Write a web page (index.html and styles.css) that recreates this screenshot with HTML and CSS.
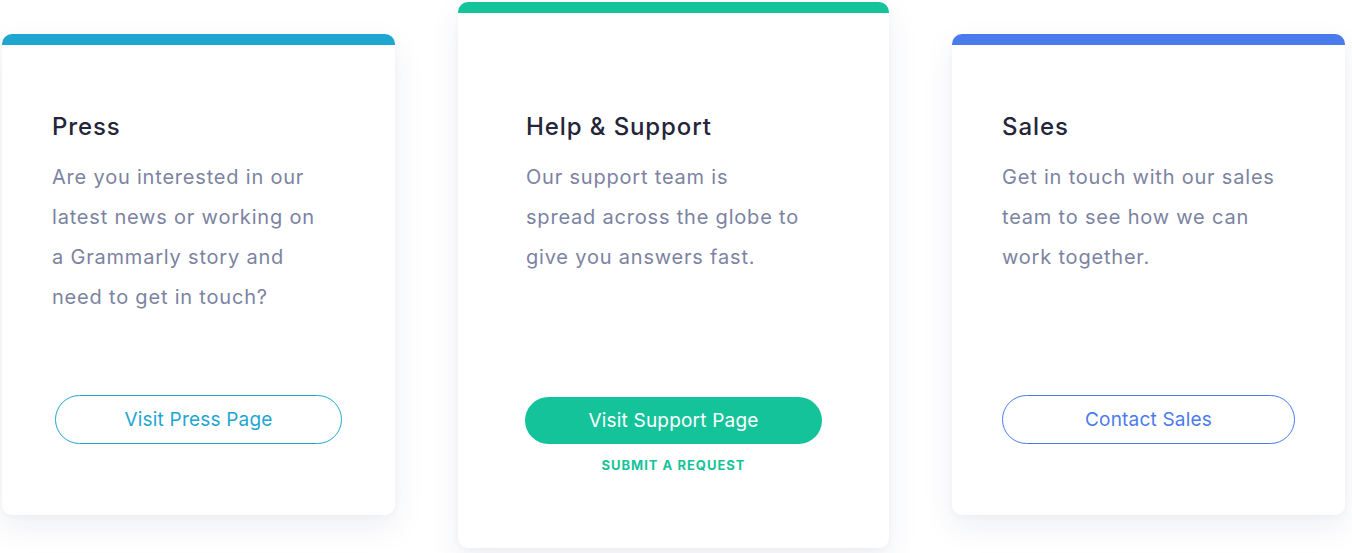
FILE: index.html
```html
<!DOCTYPE html>
<html lang="en">
<head>
<meta charset="utf-8">
<title>Contact</title>
<link rel="stylesheet" href="styles.css">
</head>
<body>
<main class="cards">
  <section class="card card-side card-press">
    <h2 class="card-title">Press</h2>
    <p class="card-text">Are you interested in our<br>latest news or working on<br>a Grammarly story and<br>need to get in touch?</p>
    <a class="btn btn-outline btn-press" href="#">Visit Press Page</a>
  </section>
  <section class="card card-support">
    <h2 class="card-title">Help &amp; Support</h2>
    <p class="card-text">Our support team is<br>spread across the globe to<br>give you answers fast.</p>
    <a class="btn btn-solid btn-support" href="#">Visit Support Page</a>
    <a class="request-link" href="#">SUBMIT A REQUEST</a>
  </section>
  <section class="card card-side card-sales">
    <h2 class="card-title">Sales</h2>
    <p class="card-text">Get in touch with our sales<br>team to see how we can<br>work together.</p>
    <a class="btn btn-outline btn-sales" href="#">Contact Sales</a>
  </section>
</main>
</body>
</html>
```
FILE: styles.css
```css
html, body {
  margin: 0;
  padding: 0;
  background: #ffffff;
}

body {
  font-family: Inter, "Noto Sans", "Liberation Sans", sans-serif;
  width: 1352px;
  height: 553px;
  overflow: hidden;
}

.cards {
  display: flex;
  align-items: flex-start;
  gap: 63px;
  padding: 2px 0 0 2px;
}

.card {
  box-sizing: border-box;
  display: flex;
  flex-direction: column;
  background: #ffffff;
  border-top: 11px solid;
  border-radius: 10px;
  box-shadow: 0 12px 32px rgba(40, 52, 110, 0.08), 0 2px 6px rgba(40, 52, 110, 0.03);
  padding: 66px 50px 71px;
}

.card-side {
  width: 393px;
  height: 481px;
  margin-top: 32px;
}

.card-press {
  border-top-color: #1ea6d1;
}

.card-support {
  width: 431px;
  height: 546px;
  border-top-color: #15c39a;
  padding: 98px 68px 73px;
}

.card-sales {
  border-top-color: #4a7bec;
}

.card-title {
  margin: 0;
  font-size: 24px;
  line-height: 32px;
  font-weight: 500;
  letter-spacing: 0.9px;
  color: #25253a;
}

.card-text {
  margin: 14px 0 0;
  font-size: 20px;
  line-height: 40px;
  letter-spacing: 0.8px;
  color: #7c83a2;
}

.btn {
  box-sizing: border-box;
  display: flex;
  align-items: center;
  justify-content: center;
  align-self: center;
  margin-top: auto;
  border-radius: 25px;
  font-size: 19px;
  letter-spacing: 0.2px;
  text-decoration: none;
}

.btn-outline {
  height: 49px;
  border: 1px solid;
  background: #ffffff;
  padding-bottom: 1px;
}

.btn-press {
  width: 287px;
  color: #1ea6d1;
  border-color: #1ea6d1;
}

.btn-sales {
  width: 293px;
  color: #4a7bec;
  border-color: #4a7bec;
}

.btn-support {
  width: 297px;
  height: 47px;
  background: #15c39a;
  color: #ffffff;
  padding-bottom: 1px;
}

.request-link {
  align-self: center;
  margin-top: 11px;
  font-size: 13px;
  line-height: 20px;
  font-weight: 700;
  letter-spacing: 1px;
  color: #15c39a;
  text-decoration: none;
}
```
